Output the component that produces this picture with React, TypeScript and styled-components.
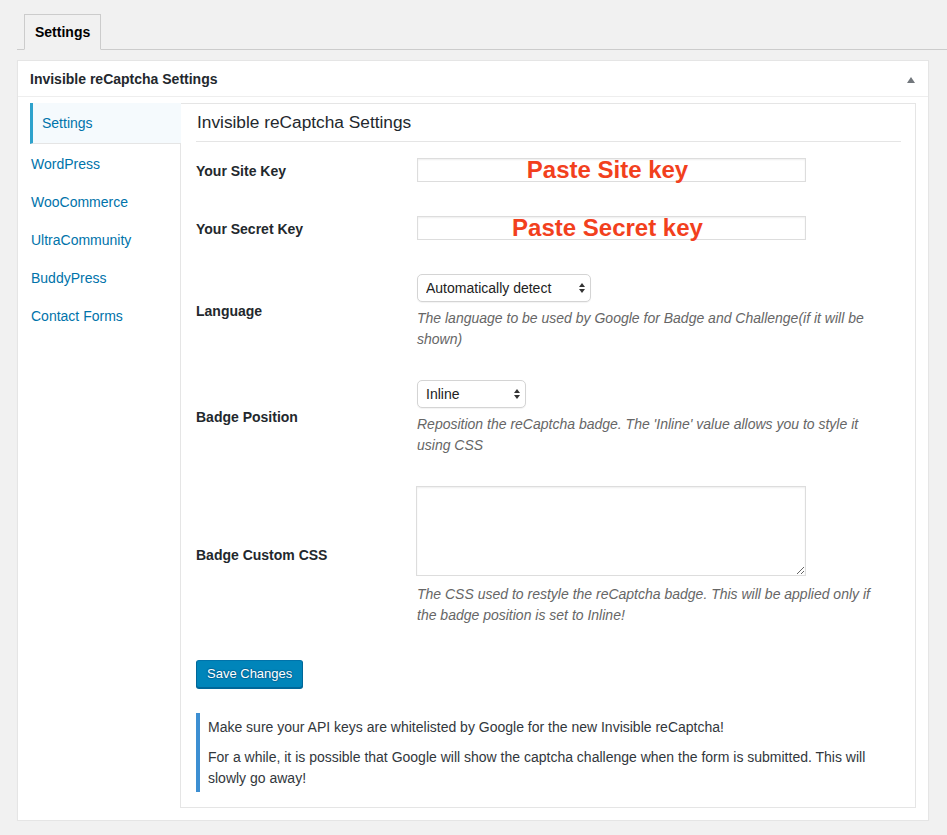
import styled, {createGlobalStyle} from 'styled-components';

const GlobalStyle = createGlobalStyle`
  body {
    margin: 0;
    background: #f1f1f1;
    font-family: 'Liberation Sans', Arial, sans-serif;
    color: #444;
    font-size: 14px;
  }
`;

const Page = styled.div`
  padding: 14px 0 0 17px;
`;

const TabBar = styled.nav`
  display: flex;
  padding-left: 7px;
  border-bottom: 1px solid #ccc;
`;

const Tab = styled.a`
  display: block;
  padding: 5px 10px;
  line-height: 24px;
  font-size: 14px;
  font-weight: 700;
  color: #000;
  background: #f1f1f1;
  border: 1px solid #ccc;
  border-bottom: 1px solid #f1f1f1;
  margin-bottom: -1px;
  text-decoration: none;
`;

const Panel = styled.section`
  margin: 10px 18px 0 0;
  background: #fff;
  border: 1px solid #e5e5e5;
  box-shadow: 0 1px 1px rgba(0, 0, 0, 0.04);
`;

const PanelHeader = styled.header`
  display: flex;
  align-items: center;
  justify-content: space-between;
  padding: 9px 13px 7px 12px;
  line-height: 19px;
  border-bottom: 1px solid #eee;

  h2 {
    margin: 0;
    font-size: 14px;
    font-weight: 700;
    color: #23282d;
  }

  svg {
    display: block;
  }
`;

const Inside = styled.div`
  display: flex;
  padding: 6px 12px 12px;
`;

const SideNav = styled.ul`
  width: 150px;
  flex: none;
  margin: 0;
  padding: 0;
  list-style: none;
`;

const NavItem = styled.li<{$active?: boolean}>`
  position: relative;
  z-index: 1;
  margin-right: ${(p) => (p.$active ? '-1px' : '0')};
  padding: ${(p) => (p.$active ? '11px 0 11px 9px' : '11px 0 9px 1px')};
  line-height: 18px;
  font-size: 14px;
  color: #0073aa;
  background: ${(p) => (p.$active ? '#f5fafd' : 'transparent')};
  border-left: ${(p) => (p.$active ? '3px solid #2ea2cc' : 'none')};
  border-bottom: ${(p) => (p.$active ? '1px solid #e5e5e5' : 'none')};
`;

const ContentBox = styled.div`
  flex: 1;
  border: 1px solid #e5e5e5;
  padding: 0 14px 15px 15px;
`;

const Heading = styled.h2`
  margin: 0;
  padding: 7px 0 8px 1px;
  font-size: 17.3px;
  line-height: 22px;
  font-weight: 400;
  color: #23282d;
  border-bottom: 1px solid #e5e5e5;
`;

const Form = styled.form`
  margin-top: 1px;
`;

const FieldRow = styled.div`
  display: grid;
  grid-template-columns: 221px 473px;
  align-items: center;
  padding: 15px 0;
`;

const Label = styled.label`
  padding-bottom: 3px;
  font-size: 14px;
  line-height: 18px;
  font-weight: 700;
  color: #23282d;
`;

const Field = styled.div`
  display: flex;
  flex-direction: column;
  align-items: flex-start;
`;

const KeyInputWrap = styled.div`
  position: relative;
  margin-bottom: 4px;
`;

const TextInput = styled.input`
  display: block;
  box-sizing: border-box;
  width: 389px;
  height: 24px;
  margin: 0;
  border: 1px solid #ddd;
  box-shadow: inset 0 1px 2px rgba(0, 0, 0, 0.07);
  background: #fff;
`;

const Annotation = styled.span`
  position: absolute;
  left: 0;
  right: 8px;
  top: 50%;
  transform: translateY(-50%);
  text-align: center;
  font-size: 24px;
  line-height: 24px;
  font-weight: 700;
  color: #f2401d;
  pointer-events: none;
  white-space: nowrap;
`;

const SelectWrap = styled.div<{$width: number}>`
  position: relative;
  width: ${(p) => p.$width}px;

  svg {
    position: absolute;
    right: 5px;
    top: 8px;
    pointer-events: none;
  }
`;

const Select = styled.select`
  appearance: none;
  display: block;
  box-sizing: border-box;
  width: 100%;
  height: 28px;
  margin: 0;
  padding: 0 20px 0 8px;
  font-family: 'Liberation Sans', Arial, sans-serif;
  font-size: 14px;
  color: #222;
  background: #fff;
  border: 1px solid #d4d4d4;
  border-radius: 5px;
  box-shadow: 0 1px 1px rgba(0, 0, 0, 0.05);
`;

const TextArea = styled.textarea`
  display: block;
  box-sizing: border-box;
  width: 390px;
  height: 90px;
  margin: 0 0 0 -1px;
  border: 1px solid #ddd;
  box-shadow: inset 0 1px 2px rgba(0, 0, 0, 0.07);
`;

const Description = styled.p<{$gap: number}>`
  margin: ${(p) => p.$gap}px 0 0;
  font-size: 14px;
  line-height: 21px;
  font-style: italic;
  color: #666;
`;

const SaveButton = styled.button`
  display: block;
  margin-top: 19px;
  height: 28px;
  padding: 0 10px;
  font-family: 'Liberation Sans', Arial, sans-serif;
  font-size: 13px;
  line-height: 26px;
  color: #fff;
  background: #0085ba;
  border: 1px solid #0073aa;
  border-color: #0073aa #006799 #006799;
  border-radius: 3px;
  box-shadow: 0 1px 0 #006799;
  text-shadow: 0 -1px 1px #006799, 1px 0 1px #006799, 0 1px 1px #006799, -1px 0 1px #006799;
`;

const Notice = styled.div`
  display: flex;
  flex-direction: column;
  gap: 9px;
  margin-top: 25px;
  padding: 4px 0 3px 8px;
  border-left: 4px solid #3d8fd2;

  p {
    margin: 0;
    font-size: 14px;
    line-height: 21px;
    color: #32373c;
  }
`;

function UpDownArrows() {
  return (
    <svg width="8" height="12" viewBox="0 0 8 12">
      <polygon points="1,5 4,1 7,5" fill="#333" />
      <polygon points="1,7 4,11 7,7" fill="#333" />
    </svg>
  );
}

const navItems = ['Settings', 'WordPress', 'WooCommerce', 'UltraCommunity', 'BuddyPress', 'Contact Forms'];

export default function App() {
  return (
    <Page>
      <GlobalStyle />
      <TabBar>
        <Tab>Settings</Tab>
      </TabBar>
      <Panel>
        <PanelHeader>
          <h2>Invisible reCaptcha Settings</h2>
          <svg width="8" height="6" viewBox="0 0 8 6">
            <polygon points="0,6 4,0 8,6" fill="#72777c" />
          </svg>
        </PanelHeader>
        <Inside>
          <SideNav>
            {navItems.map((item, i) => (
              <NavItem key={item} $active={i === 0}>
                {item}
              </NavItem>
            ))}
          </SideNav>
          <ContentBox>
            <Heading>Invisible reCaptcha Settings</Heading>
            <Form onSubmit={(e) => e.preventDefault()}>
              <FieldRow>
                <Label>Your Site Key</Label>
                <Field>
                  <KeyInputWrap>
                    <TextInput type="text" />
                    <Annotation>Paste Site key</Annotation>
                  </KeyInputWrap>
                </Field>
              </FieldRow>
              <FieldRow>
                <Label>Your Secret Key</Label>
                <Field>
                  <KeyInputWrap>
                    <TextInput type="text" />
                    <Annotation>Paste Secret key</Annotation>
                  </KeyInputWrap>
                </Field>
              </FieldRow>
              <FieldRow>
                <Label>Language</Label>
                <Field>
                  <SelectWrap $width={174}>
                    <Select defaultValue="auto">
                      <option value="auto">Automatically detect</option>
                    </Select>
                    <UpDownArrows />
                  </SelectWrap>
                  <Description $gap={6}>
                    The language to be used by Google for Badge and Challenge(if it will be shown)
                  </Description>
                </Field>
              </FieldRow>
              <FieldRow>
                <Label>Badge Position</Label>
                <Field>
                  <SelectWrap $width={109}>
                    <Select defaultValue="inline">
                      <option value="inline">Inline</option>
                    </Select>
                    <UpDownArrows />
                  </SelectWrap>
                  <Description $gap={6}>
                    Reposition the reCaptcha badge. The 'Inline' value allows you to style it using CSS
                  </Description>
                </Field>
              </FieldRow>
              <FieldRow>
                <Label>Badge Custom CSS</Label>
                <Field>
                  <TextArea />
                  <Description $gap={8}>
                    The CSS used to restyle the reCaptcha badge. This will be applied only if the badge
                    position is set to Inline!
                  </Description>
                </Field>
              </FieldRow>
              <SaveButton type="submit">Save Changes</SaveButton>
            </Form>
            <Notice>
              <p>Make sure your API keys are whitelisted by Google for the new Invisible reCaptcha!</p>
              <p>
                For a while, it is possible that Google will show the captcha challenge when the form is
                submitted. This will slowly go away!
              </p>
            </Notice>
          </ContentBox>
        </Inside>
      </Panel>
    </Page>
  );
}
